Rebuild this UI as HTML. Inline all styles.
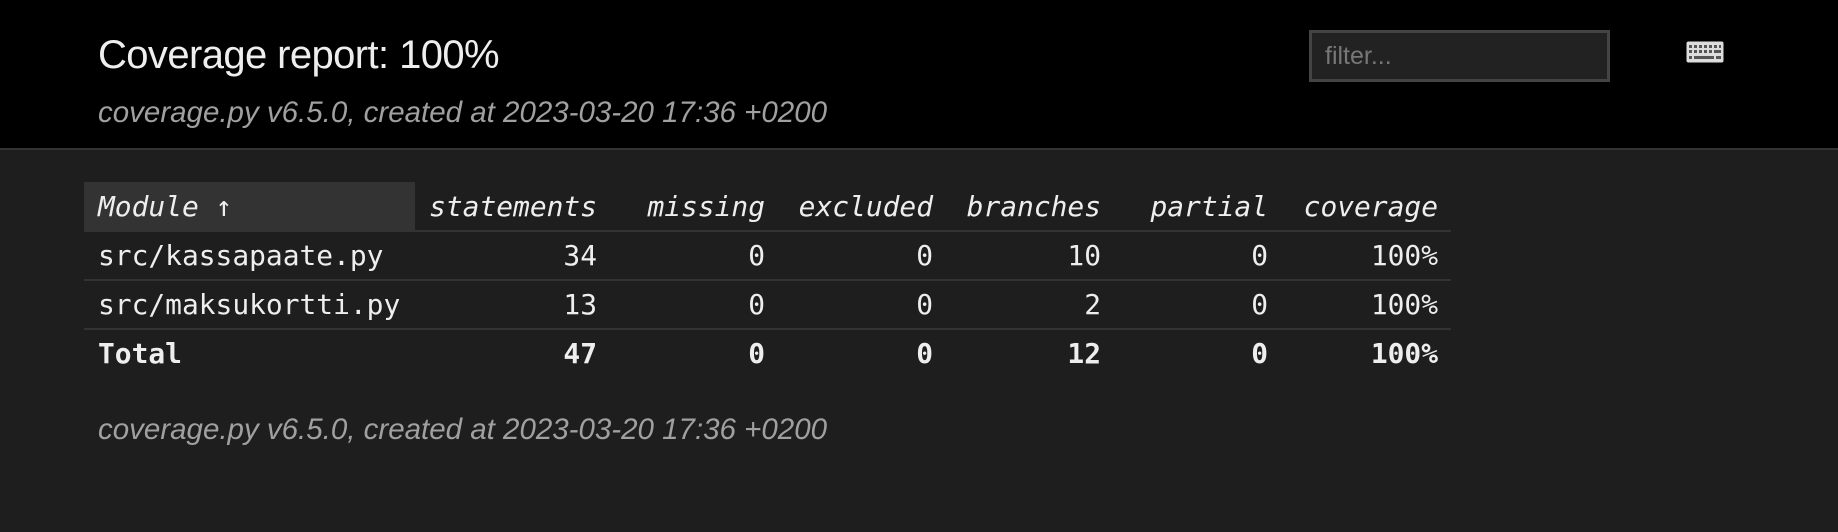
<!DOCTYPE html>
<html><head><meta charset="utf-8"><style>
html,body{margin:0;padding:0;width:1838px;height:532px;overflow:hidden;background:#1e1e1e;font-family:"Liberation Sans",sans-serif;}
.hdr{position:absolute;left:0;top:0;width:1838px;height:148px;background:#000;border-bottom:2px solid #333;}
.t{position:absolute;left:98px;top:33px;font-size:40px;color:#eee;white-space:nowrap;letter-spacing:-0.6px;}
.s{position:absolute;font-style:italic;font-size:29.5px;color:#a0a0a0;white-space:nowrap;}
.f{position:absolute;left:1309px;top:30px;width:295px;height:46px;border:3px solid #444;background:#222;box-sizing:content-box;}
.f span{position:absolute;left:13px;top:9px;font-size:25px;color:#777;}
.m{position:absolute;font-family:"DejaVu Sans Mono","Liberation Mono",monospace;font-size:27.9px;color:#eee;white-space:nowrap;line-height:49px;}
.r{text-align:right;}
.hd{font-style:italic;}
.b{font-weight:bold;}
.line{position:absolute;left:84px;width:1367px;height:2px;background:#333;}
</style></head><body>
<div class="hdr">
<div class="t">Coverage report: 100%</div>
<div class="s" style="left:98px;top:96px;">coverage.py v6.5.0, created at 2023-03-20 17:36 +0200</div>
<div class="f"><span>filter...</span></div>
<svg style="position:absolute;left:1686px;top:41px" width="38" height="22" viewBox="0 0 38 22"><rect x="0.5" y="0.5" width="37" height="21" rx="2" fill="#ddd"/><g fill="#555"><rect x="3" y="4" width="3" height="3"/><rect x="8" y="4" width="3" height="3"/><rect x="13" y="4" width="3" height="3"/><rect x="18" y="4" width="3" height="3"/><rect x="23" y="4" width="3" height="3"/><rect x="28" y="4" width="3" height="3"/><rect x="33" y="4" width="2" height="3"/><rect x="3" y="9" width="3" height="3"/><rect x="8" y="9" width="3" height="3"/><rect x="13" y="9" width="3" height="3"/><rect x="18" y="9" width="3" height="3"/><rect x="23" y="9" width="3" height="3"/><rect x="28" y="9" width="7" height="3"/><rect x="3" y="15" width="3" height="3"/><rect x="8" y="15" width="20" height="3"/><rect x="30" y="15" width="5" height="3"/></g></svg>
</div>
<div style="position:absolute;left:84px;top:182px;width:331px;height:49px;background:#333;"></div>
<div class="line" style="top:230px;"></div>
<div class="line" style="top:279px;"></div>
<div class="line" style="top:328px;"></div>
<div class="m hd" style="left:98px;top:182px;">Module ↑</div>
<div class="m hd r" style="right:1241px;top:182px;">statements</div>
<div class="m hd r" style="right:1073px;top:182px;">missing</div>
<div class="m hd r" style="right:905px;top:182px;">excluded</div>
<div class="m hd r" style="right:737px;top:182px;">branches</div>
<div class="m hd r" style="right:570px;top:182px;">partial</div>
<div class="m hd r" style="right:400px;top:182px;">coverage</div>

<div class="m" style="left:98px;top:231px;">src/kassapaate.py</div>
<div class="m r" style="right:1241px;top:231px;">34</div>
<div class="m r" style="right:1073px;top:231px;">0</div>
<div class="m r" style="right:905px;top:231px;">0</div>
<div class="m r" style="right:737px;top:231px;">10</div>
<div class="m r" style="right:570px;top:231px;">0</div>
<div class="m r" style="right:400px;top:231px;">100%</div>

<div class="m" style="left:98px;top:280px;">src/maksukortti.py</div>
<div class="m r" style="right:1241px;top:280px;">13</div>
<div class="m r" style="right:1073px;top:280px;">0</div>
<div class="m r" style="right:905px;top:280px;">0</div>
<div class="m r" style="right:737px;top:280px;">2</div>
<div class="m r" style="right:570px;top:280px;">0</div>
<div class="m r" style="right:400px;top:280px;">100%</div>

<div class="m b" style="left:98px;top:329px;">Total</div>
<div class="m b r" style="right:1241px;top:329px;">47</div>
<div class="m b r" style="right:1073px;top:329px;">0</div>
<div class="m b r" style="right:905px;top:329px;">0</div>
<div class="m b r" style="right:737px;top:329px;">12</div>
<div class="m b r" style="right:570px;top:329px;">0</div>
<div class="m b r" style="right:400px;top:329px;">100%</div>

<div class="s" style="left:98px;top:413px;">coverage.py v6.5.0, created at 2023-03-20 17:36 +0200</div>
</body></html>
